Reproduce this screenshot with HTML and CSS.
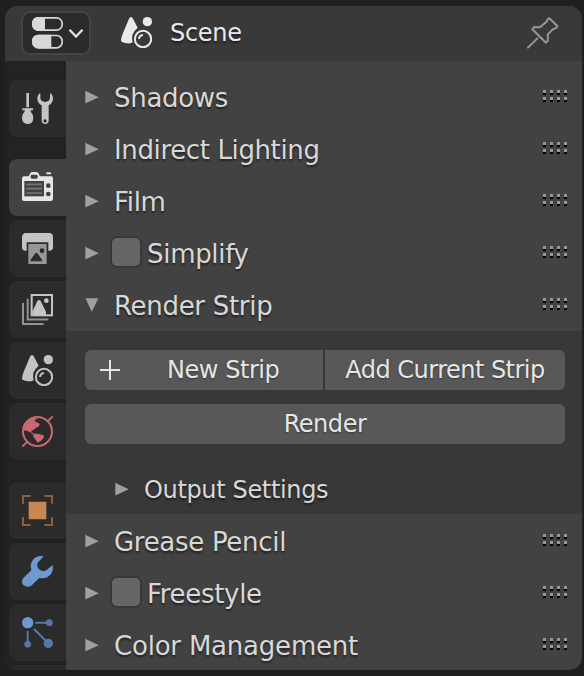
FILE: index.html
```html
<!DOCTYPE html>
<html lang="en">
<head>
<meta charset="utf-8">
<title>Properties</title>
<link rel="stylesheet" href="styles.css">
</head>
<body>
<svg class="defs" width="0" height="0" aria-hidden="true">
  <symbol id="scene" viewBox="0 0 93 93">
    <path fill="currentColor" d="M30 0Q34 0 36 5L50 32Q37 43 34 54Q32 67 35 76Q28 81 13 78Q0 76 0 70Q1 60 6 48L24 5Q26 0 30 0Z"/>
    <circle cx="79" cy="14" r="14" fill="currentColor"/>
    <circle cx="66" cy="66" r="24.500" fill="none" stroke="currentColor" stroke-width="6"/>
    <path d="M54 66Q55 55 66 54" fill="none" stroke="currentColor" stroke-width="6"/>
  </symbol>
  <symbol id="grip" viewBox="0 0 24 12">
    <path fill="#000" d="M0 3h3v2H0zM7 3h3v2H7zM14 3h3v2h-3zM21 3h3v2h-3zM0 10h3v2H0zM7 10h3v2H7zM14 10h3v2h-3zM21 10h3v2h-3z"/>
    <path fill="#989898" d="M0 0h3v3H0zM7 0h3v3H7zM14 0h3v3h-3zM21 0h3v3h-3zM0 7h3v3H0zM7 7h3v3H7zM14 7h3v3h-3zM21 7h3v3h-3z"/>
  </symbol>
  <symbol id="arrow" viewBox="0 0 14 14"><path d="M.3 .7V13.500L13.700 7.200Z" fill="#a0a0a0"/></symbol>
</svg>
<div class="editor">
  <header class="header">
    <button class="picker">
      <svg width="31" height="32" viewBox="0 0 93 96">
        <rect x="2.500" y="2.500" width="88" height="37" rx="17" fill="#2b2b2b" stroke="#d8d8d8" stroke-width="5"/>
        <path d="M19 0H39V41H19Q0 40 0 20Q0 1 19 0Z" fill="#d8d8d8"/>
        <rect x="2.500" y="55.500" width="88" height="37" rx="17" fill="#2b2b2b" stroke="#d8d8d8" stroke-width="5"/>
        <path d="M19 53H58V94H19Q0 93 0 73Q0 54 19 53Z" fill="#d8d8d8"/>
      </svg>
      <svg width="16" height="10" viewBox="0 0 16 10"><path d="M1.500 1.700L8 8.500L14.500 1.700" fill="none" stroke="#e2e2e2" stroke-width="2.300"/></svg>
    </button>
    <svg class="header-scene" width="31" height="31"><use href="#scene"/></svg>
    <span class="title">Scene</span>
    <svg class="pin" width="32" height="32" viewBox="0 0 96 96">
      <path d="M67 4L91 27L89 32L77 37L62 53L63 70L57 77L16 37L21 30L39 31L60 13L61 8Z M31 64L3 92" fill="none" stroke="#979797" stroke-width="6" stroke-linejoin="round" stroke-linecap="round"/>
    </svg>
  </header>
  <div class="main">
    <nav class="tabs">
      <div class="tab"><svg class="icon" viewBox="0 0 93 93">
        <path fill="#c4c4c4" d="M13 0h8v43h-8zM1 46h32v6h-7v4Q34 62 34 74Q33 93 17 93Q0 92 0 74Q0 62 8 56v-4H1z"/>
        <path fill="#c4c4c4" fill-rule="evenodd" d="M55 0V15Q56 26 69 27Q83 26 84 15V0Q93 5 93 18Q92 31 80 37V84Q79 93 69 93Q60 92 59 84V37Q47 31 46 18Q46 5 55 0ZM69 79a5 5 0 1 0 .1 0Z"/>
      </svg></div>
      <div class="tab active break"><svg class="icon" viewBox="0 0 93 93">
        <path fill="#e6e6e6" d="M7 13H20L25 3Q27 0 31 0H43Q47 0 49 3L54 13H88Q93 13 93 19V81Q93 87 87 87H6Q0 87 0 81V19Q0 13 7 13ZM73 7V3Q73 1 76 1H84Q87 1 87 3V7Z"/>
        <rect x="26" y="8" width="21" height="12" rx="4" fill="#424242"/>
        <rect x="7" y="27" width="59" height="46" fill="#424242"/>
        <path d="M13 37H60M13 50H60M13 63H60" stroke="#777" stroke-width="5"/>
        <circle cx="79" cy="41" r="7" fill="#424242"/><circle cx="79" cy="66" r="7" fill="#424242"/>
      </svg></div>
      <div class="tab"><svg class="icon" viewBox="0 0 93 93">
        <path fill="#c4c4c4" d="M11 0H82Q93 1 93 12V44Q92 52 83 53H79V28H14V53H10Q1 52 0 44V12Q1 1 11 0Z"/>
        <path fill="#969696" d="M19 33H74V93H19Z"/>
        <path fill="#2b2b2b" d="M26 85V80L39 62Q43 57 47 62L60 80V85Z"/><circle cx="60" cy="53" r="7" fill="#2b2b2b"/>
      </svg></div>
      <div class="tab"><svg class="icon" viewBox="0 0 93 93">
        <path d="M3 27V90H65M17 14V76.500H79" fill="none" stroke="#929292" stroke-width="6"/>
        <rect x="29" y="3" width="61" height="61" fill="#2b2b2b" stroke="#c4c4c4" stroke-width="6"/>
        <path d="M31 53L46 21Q51 15 56 21L72 53V63H31Z" fill="#c4c4c4"/><circle cx="73" cy="20" r="7" fill="#c4c4c4"/>
      </svg></div>
      <div class="tab gray"><svg class="icon"><use href="#scene"/></svg></div>
      <div class="tab"><svg class="icon" viewBox="0 0 93 93">
        <g fill="none" stroke="#c9686e" stroke-width="6"><circle cx="46.500" cy="46.500" r="43.500"/><path d="M76 17L92 1M1 92L17 76"/></g>
        <path fill="#c9686e" d="M10 20L29 4L49 8L37 12L41 17L53 23L51 31L41 36L34 42L29 44L28 50H32L39 57L35 57L23 48L17 45L4 43ZM34 53H46L65 58L66 64L57 75L46 80L40 70L34 63Z"/>
      </svg></div>
      <div class="tab break"><svg class="icon" viewBox="0 0 93 93">
        <path d="M3 26V3H26M67 3H90V26M90 67V90H67M26 90H3V67" fill="none" stroke="#8a603f" stroke-width="6"/>
        <rect x="20" y="20" width="53" height="53" rx="2" fill="#c98852"/>
      </svg></div>
      <div class="tab"><svg class="icon" viewBox="0 0 93 93">
        <path fill="#6d98d4" d="M65 1L48 19Q42 30 51 40Q61 49 73 43L92 27Q95 41 87 54Q75 70 52 66L27 90Q14 96 4 87Q-4 76 4 66L28 43Q22 25 34 10Q47-3 65 1Z"/>
      </svg></div>
      <div class="tab"><svg class="icon" viewBox="0 0 93 93">
        <g stroke="#5679a7" stroke-width="6"><path d="M40 17H82M17 42V82M36 36L78 78"/></g>
        <g fill="#5679a7"><circle cx="82" cy="17" r="10"/><circle cx="17" cy="82" r="10"/><circle cx="79" cy="79" r="14"/></g>
        <circle cx="17" cy="17" r="17" fill="#6d98d4"/>
      </svg></div>
      <div class="tab"></div>
    </nav>
    <main class="panels">
      <section class="row"><svg class="arrow"><use href="#arrow"/></svg><span>Shadows</span><svg class="grip"><use href="#grip"/></svg></section>
      <section class="row narrow"><svg class="arrow"><use href="#arrow"/></svg><span>Indirect Lighting</span><svg class="grip"><use href="#grip"/></svg></section>
      <section class="row"><svg class="arrow"><use href="#arrow"/></svg><span>Film</span><svg class="grip"><use href="#grip"/></svg></section>
      <section class="row"><svg class="arrow"><use href="#arrow"/></svg><i class="check"></i><span>Simplify</span><svg class="grip"><use href="#grip"/></svg></section>
      <section class="row"><svg class="arrow open"><use href="#arrow"/></svg><span>Render Strip</span><svg class="grip"><use href="#grip"/></svg></section>
      <section class="body">
        <div class="pair">
          <button class="btn new"><svg width="20" height="20" viewBox="0 0 20 20"><path d="M10 0V20M0 10H20" stroke="#e6e6e6" stroke-width="2"/></svg><span>New Strip</span></button>
          <button class="btn add">Add Current Strip</button>
        </div>
        <button class="btn render">Render</button>
        <div class="sub"><svg class="arrow"><use href="#arrow"/></svg><span>Output Settings</span></div>
      </section>
      <section class="row"><svg class="arrow"><use href="#arrow"/></svg><span>Grease Pencil</span><svg class="grip"><use href="#grip"/></svg></section>
      <section class="row"><svg class="arrow"><use href="#arrow"/></svg><i class="check"></i><span>Freestyle</span><svg class="grip"><use href="#grip"/></svg></section>
      <section class="row wide"><svg class="arrow"><use href="#arrow"/></svg><span>Color Management</span><svg class="grip"><use href="#grip"/></svg></section>
    </main>
  </div>
</div>
</body>
</html>
```
FILE: styles.css
```css
* { box-sizing: border-box; }
body {
  margin: 0;
  height: 676px;
  padding: 6px 2px 6px 5px;
  overflow: hidden;
  background: #1f1f1f;
  font-family: "DejaVu Sans", sans-serif;
  color: #d8d8d8;
}
.defs { position: absolute; }
svg { display: block; flex: none; }
button { font: inherit; color: inherit; border: 0; margin: 0; padding: 0; }

.editor {
  display: flex;
  flex-direction: column;
  height: 664px;
  border-radius: 13px;
  overflow: hidden;
  background: #424242;
}
.header {
  display: flex;
  align-items: center;
  height: 55px;
  flex: none;
  padding: 0 23px 2px 16px;
  background: #393939;
}
.picker {
  display: flex;
  align-items: center;
  gap: 5px;
  width: 70px;
  height: 44px;
  padding-left: 9px;
  border: 2px solid #454545;
  border-radius: 9px;
  background: #2b2b2b;
}
.header-scene { margin-left: 30px; color: #e9e9e9; }
.title {
  margin-left: 18px;
  font-size: 24px;
  letter-spacing: -0.3px;
  color: #e9e9e9;
  text-shadow: 0 2px 2px rgba(0, 0, 0, .5);
}
.pin { margin-left: auto; }

.main { display: flex; flex: 1; min-height: 0; }
.tabs {
  display: flex;
  flex-direction: column;
  gap: 4px;
  width: 61px;
  padding: 19px 0 0 4px;
  background: #232323;
  overflow: hidden;
}
.tab {
  flex: none;
  height: 57px;
  padding: 13px;
  border-radius: 8px 0 0 8px;
  background: #2b2b2b;
  box-shadow: 0 0 2px #1c1c1c;
}
.tab.break { margin-top: 18px; }
.tab.active { background: #424242; }
.tab.gray { color: #c4c4c4; }
.icon { width: 31px; height: 31px; overflow: visible; }

.panels { flex: 1; padding-top: 10px; }
.row {
  display: flex;
  align-items: center;
  height: 52px;
  padding: 0 15px 0 19px;
  font-size: 26px;
  line-height: 52px;
  letter-spacing: -0.3px;
  text-shadow: 0 2px 2px rgba(0, 0, 0, .5);
}
.row span { padding-top: 2px; }
.row.narrow { letter-spacing: -0.37px; }
.row.wide { letter-spacing: -0.21px; }
.body + .row { margin-top: 1px; }
.arrow { width: 14px; height: 14px; margin-right: 15px; }
.arrow.open { transform: rotate(90deg); }
.grip { width: 24px; height: 12px; margin: 0 0 2px auto; }
.check {
  width: 32px;
  height: 32px;
  margin: 0 5px 2px -4px;
  border: 2px solid #383838;
  border-radius: 7px;
  background: #666;
}
.body {
  height: 183px;
  padding: 19px 17px 0 19px;
  background: #383838;
  font-size: 24px;
}
.pair { display: flex; gap: 2px; }
.btn {
  display: flex;
  align-items: center;
  justify-content: center;
  height: 40px;
  border-radius: 6px;
  background: #585858;
  color: #e6e6e6;
  letter-spacing: -0.45px;
  text-shadow: 0 1px 2px rgba(0, 0, 0, .4);
}
.new { width: 238px; border-radius: 6px 0 0 6px; justify-content: flex-start; padding-left: 15px; }
.new span { margin-left: 47px; }
.add { flex: 1; border-radius: 0 6px 6px 0; letter-spacing: -0.52px; }
.render { width: 100%; margin-top: 14px; }
.sub {
  display: flex;
  align-items: center;
  height: 52px;
  margin-top: 19px;
  padding-left: 30px;
  letter-spacing: -0.35px;
  text-shadow: 0 2px 2px rgba(0, 0, 0, .5);
}
.sub span { padding-top: 2px; }
```
